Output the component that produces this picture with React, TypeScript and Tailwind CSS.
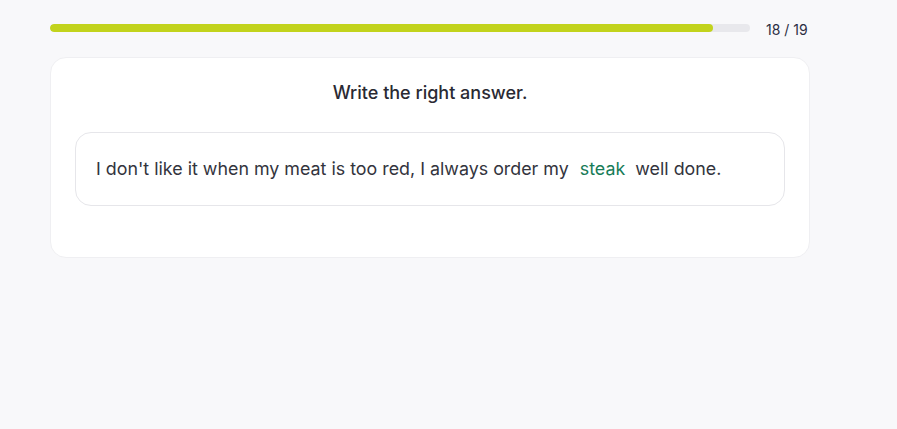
import React from 'react';

const App: React.FC = () => {
  const current = 18;
  const total = 19;

  return (
    <div className="min-h-screen w-full bg-[#f8f8fa] pt-[22px] pl-[50px]" style={{ fontFamily: 'Inter, "Noto Sans", sans-serif' }}>
      <div className="w-[760px]">
        {/* Progress */}
        <div className="flex items-center h-[12px]">
          <div className="w-[700px] h-[8px] rounded-full bg-[#e8e8ec] overflow-hidden">
            <div className="h-full rounded-full bg-[#c2d31c]" style={{ width: `${(663 / 700) * 100}%` }} />
          </div>
          <span className="ml-[16px] mt-[2px] text-[14px] text-[#2b2d42]">{current} / {total}</span>
        </div>

        {/* Card */}
        <div className="mt-[23px] h-[201px] rounded-[16px] border border-[#efeff2] bg-white px-[24px] pt-[21px]">
          <h2 className="text-center text-[18px] font-medium text-[#2a2a33]">Write the right answer.</h2>
          <div className="mt-[26px] h-[74px] rounded-[16px] border border-[#e6e6ea] flex items-center px-[20px]">
            <p className="text-[17.85px] text-[#33343d]">
              I don't like it when my meat is too red, I always order my{' '}
              <span className="pl-[6px] pr-[5px] text-[#177c58]">steak</span>{' '}
              well done.
            </p>
          </div>
        </div>
      </div>
    </div>
  );
};

export default App;
